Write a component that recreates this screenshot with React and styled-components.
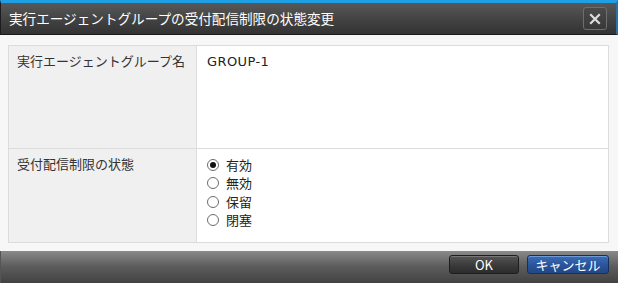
import React from "react";
import styled, { createGlobalStyle } from "styled-components";

const Global = createGlobalStyle`
  html, body { margin: 0; padding: 0; background: #ffffff; }
  body { font-family: "Noto Sans CJK JP", "Noto Sans", sans-serif; }
`;

const Dialog = styled.div`
  width: 618px;
  display: flex;
  flex-direction: column;
  background: #f6f6f6;
`;

const TitleBar = styled.div`
  height: 31px;
  border-top: 3px solid #1f9fe4;
  border-left: 1px solid #1c1c1c;
  border-right: 2px solid #2a6fa6;
  background: linear-gradient(#585858, #424242 55%, #333333);
  display: flex;
  align-items: center;
  justify-content: space-between;
  padding: 0 8px 0 8px;
  box-sizing: content-box;
  border-bottom: 1px solid #1a1a1a;
`;

const Title = styled.div`
  color: #ffffff;
  font-size: 13.6px;
  line-height: 16px;
  margin-top: -1px;
`;

const CloseButton = styled.div`
  width: 22px;
  height: 21px;
  border: 1px solid #6e6e6e;
  border-radius: 3px;
  background: linear-gradient(#4a4a4a, #383838);
  display: flex;
  align-items: center;
  justify-content: center;
  margin-right: 1px;
`;

const Body = styled.div`
  padding: 10px 9px 8px 8px;
  background: #f7f7f7;
`;

const Table = styled.div`
  display: grid;
  grid-template-columns: 188px 1fr;
  border: 1px solid #dcdcdc;
  background: #ffffff;
`;

const LabelCell = styled.div`
  background: #f0f0f0;
  color: #333333;
  font-size: 13px;
  line-height: 16px;
  padding: 7px 8px;
  height: ${(p) => p.$h}px;
  box-sizing: border-box;
  border-right: 1px solid #dcdcdc;
  border-top: ${(p) => (p.$first ? "none" : "1px solid #dcdcdc")};
`;

const ValueCell = styled.div`
  color: #222222;
  font-size: 13px;
  line-height: 16px;
  padding: 7px 10px;
  height: ${(p) => p.$h}px;
  box-sizing: border-box;
  border-top: ${(p) => (p.$first ? "none" : "1px solid #dcdcdc")};
`;

const PlainValue = styled.span`
  font-family: "DejaVu Sans", "Noto Sans", sans-serif;
  font-size: 13px;
  letter-spacing: 0.4px;
`;

const RadioList = styled.div`
  display: flex;
  flex-direction: column;
  gap: 2.3px;
  padding-top: 1px;
`;

const RadioRow = styled.label`
  display: flex;
  align-items: center;
  gap: 7px;
  height: 16px;
  font-size: 13px;
  color: #222;
`;

const RadioCircle = styled.span`
  width: 10px;
  height: 10px;
  border: 1px solid #6c6c6c;
  border-radius: 50%;
  background: #ffffff;
  display: flex;
  align-items: center;
  justify-content: center;
  &::after {
    content: "";
    width: 6px;
    height: 6px;
    border-radius: 50%;
    background: ${(p) => (p.$checked ? "#111" : "transparent")};
  }
`;

const Footer = styled.div`
  height: 33px;
  background: linear-gradient(#8a8a8a, #5e5e5e 45%, #404040);
  display: flex;
  align-items: flex-start;
  justify-content: flex-end;
  gap: 8px;
  padding: 4px 9px 0 0;
  box-sizing: border-box;
  border-left: 1px solid #555;
`;

const Button = styled.div`
  height: 17px;
  padding: 0 ${(p) => p.$px}px;
  min-width: ${(p) => p.$w}px;
  box-sizing: content-box;
  border: 1px solid ${(p) => (p.$primary ? "#16305e" : "#1e1e1e")};
  border-radius: 3px;
  box-shadow: inset 0 1px 0 ${(p) => (p.$primary ? "#6f9ad8" : "#777")};
  background: ${(p) =>
    p.$primary
      ? "linear-gradient(#3c6db6, #2a5399 55%, #234786)"
      : "linear-gradient(#555, #3a3a3a 55%, #2c2c2c)"};
  color: #ffffff;
  font-size: 13px;
  line-height: 17px;
  text-align: center;
`;

const CloseIcon = () => (
  <svg width="12" height="12" viewBox="0 0 12 12">
    <path d="M2 2 L10 10 M10 2 L2 10" stroke="#dcdcdc" strokeWidth="2.2" strokeLinecap="square" />
  </svg>
);

const options = [
  { label: "有効", checked: true },
  { label: "無効" },
  { label: "保留" },
  { label: "閉塞" },
];

export default function App() {
  return (
    <>
      <Global />
      <Dialog>
        <TitleBar>
          <Title>実行エージェントグループの受付配信制限の状態変更</Title>
          <CloseButton>
            <CloseIcon />
          </CloseButton>
        </TitleBar>
        <Body>
          <Table>
            <LabelCell $first $h={102}>実行エージェントグループ名</LabelCell>
            <ValueCell $first $h={102}>
              <PlainValue>GROUP-1</PlainValue>
            </ValueCell>
            <LabelCell $h={94}>受付配信制限の状態</LabelCell>
            <ValueCell $h={94}>
              <RadioList>
                {options.map((o) => (
                  <RadioRow key={o.label}>
                    <RadioCircle $checked={o.checked} />
                    {o.label}
                  </RadioRow>
                ))}
              </RadioList>
            </ValueCell>
          </Table>
        </Body>
        <Footer>
          <Button $w={48} $px={10}>OK</Button>
          <Button $primary $w={66} $px={7}>キャンセル</Button>
        </Footer>
      </Dialog>
    </>
  );
}
